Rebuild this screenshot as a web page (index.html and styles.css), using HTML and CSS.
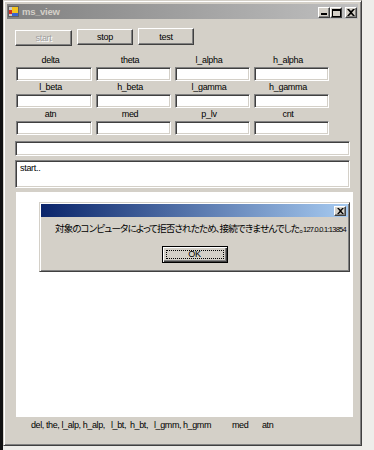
FILE: index.html
```html
<!DOCTYPE html>
<html lang="ja">
<head>
    <meta charset="UTF-8">
    <title>ms_view</title>
    <link rel="stylesheet" href="styles.css">
</head>
<body>
    <div class="window">
        <div class="titlebar">
            <svg class="app-icon" width="11" height="11" viewBox="0 0 11 11">
                <rect x="0.5" y="0.5" width="10" height="10" fill="#c8c8c8" stroke="#606060"/>
                <rect x="1" y="4" width="3" height="4" fill="#d03020"/>
                <rect x="4" y="1" width="6" height="6" fill="#f2c420"/>
                <rect x="4" y="7" width="6" height="3" fill="#3a64d0"/>
            </svg>
            <span class="title">ms_view</span>
            <div class="caption-btns">
                <span class="cap-btn min"><svg width="6" height="2"><rect width="6" height="2"/></svg></span>
                <span class="cap-btn max"><svg width="9" height="8"><path d="M0 0h9v8H0zM1 2v5h7V2z" fill-rule="evenodd"/></svg></span>
                <span class="cap-btn close"><svg width="8" height="7" viewBox="0 0 8 7"><path d="M0 0h2l2 2 2-2h2L5 3.5 8 7H6L4 5 2 7H0l3-3.5z"/></svg></span>
            </div>
        </div>

        <div class="client">
            <!-- start / stop / test -->
            <div class="toolbar">
                <button class="btn btn-start" disabled>start</button>
                <button class="btn btn-stop">stop</button>
                <button class="btn btn-test">test</button>
            </div>

            <!-- value boxes -->
            <div class="fields">
                <div class="field"><div class="label">delta</div><div class="textbox"></div></div>
                <div class="field"><div class="label">theta</div><div class="textbox"></div></div>
                <div class="field"><div class="label">l_alpha</div><div class="textbox"></div></div>
                <div class="field"><div class="label">h_alpha</div><div class="textbox"></div></div>
                <div class="field"><div class="label">l_beta</div><div class="textbox"></div></div>
                <div class="field"><div class="label">h_beta</div><div class="textbox"></div></div>
                <div class="field"><div class="label">l_gamma</div><div class="textbox"></div></div>
                <div class="field"><div class="label">h_gamma</div><div class="textbox"></div></div>
                <div class="field"><div class="label">atn</div><div class="textbox"></div></div>
                <div class="field"><div class="label">med</div><div class="textbox"></div></div>
                <div class="field"><div class="label">p_lv</div><div class="textbox"></div></div>
                <div class="field"><div class="label">cnt</div><div class="textbox"></div></div>
            </div>

            <div class="textbox wide"></div>
            <div class="textbox wide multi">start..</div>

            <!-- graph area -->
            <div class="graph"></div>

            <div class="legend">
                <span>del, the, l_alp, h_alp,</span>
                <span>l_bt,</span>
                <span>h_bt,</span>
                <span>l_gmm,</span>
                <span>h_gmm</span>
                <span>med</span>
                <span>atn</span>
            </div>
        </div>
    </div>

    <!-- error message box -->
    <div class="msgbox">
        <div class="msg-title">
            <span class="cap-btn small"><svg width="7" height="6" viewBox="0 0 8 7"><path d="M0 0h2l2 2 2-2h2L5 3.5 8 7H6L4 5 2 7H0l3-3.5z"/></svg></span>
        </div>
        <div class="msg-text">対象のコンピュータによって拒否されたため、接続できませんでした。<span class="addr">127.0.0.1:13854</span></div>
        <div class="msg-actions">
            <button class="btn btn-ok"><span class="focus">OK</span></button>
        </div>
    </div>
</body>
</html>
```

FILE: styles.css
```css
body {
    margin: 0;
    width: 374px;
    height: 450px;
    overflow: hidden;
    position: relative;
    background: linear-gradient(to right, #111 0, #111 3px, transparent 3px), #eeedea;
    font-family: "Liberation Sans", "Noto Sans CJK JP", sans-serif;
    font-size: 9px;
    letter-spacing: -0.3px;
    color: #000;
}

/* main form window */
.window {
    position: absolute;
    left: 3px;
    top: 0;
    width: 359px;
    height: 446px;
    box-sizing: border-box;
    background: #d4d0c8;
    border: 1px solid;
    border-color: #d4d0c8 #404040 #404040 #d4d0c8;
    box-shadow: inset 1px 1px #fff, inset -1px -1px #808080;
    padding: 3px;
}

.titlebar {
    height: 15px;
    display: flex;
    align-items: center;
    background: linear-gradient(to right, #808080, #c0c0c0);
    padding: 0 1px 0 1px;
}

.app-icon {
    display: block;
    flex: none;
}

.title {
    margin-left: 3px;
    font-weight: bold;
    color: #d4d0c8;
    font-size: 9.5px;
}

.caption-btns {
    margin-left: auto;
    display: flex;
    padding-top: 2px;
}

.cap-btn {
    box-sizing: border-box;
    width: 12px;
    height: 11px;
    display: flex;
    align-items: center;
    justify-content: center;
    background: #d4d0c8;
    border: 1px solid;
    border-color: #fff #404040 #404040 #fff;
    box-shadow: inset -1px -1px #808080;
}

.cap-btn svg {
    display: block;
    fill: #000;
}

.cap-btn.min {
    align-items: flex-end;
    justify-content: flex-start;
    padding: 0 0 2px 2px;
}

.cap-btn.close {
    margin-left: 3px;
}

.client {
    padding: 9px 0 0 8px;
}

/* buttons */
.toolbar {
    display: flex;
    align-items: flex-start;
    gap: 5px;
}

.btn {
    box-sizing: border-box;
    height: 16px;
    padding: 0;
    margin: 0;
    background: #d4d0c8;
    border: 1px solid;
    border-color: #fff #404040 #404040 #fff;
    box-shadow: inset -1px -1px #808080;
    font: inherit;
    letter-spacing: inherit;
    color: #000;
}

.btn-start {
    width: 57px;
    margin-top: 2px;
    color: #a0a0a0;
    text-shadow: 1px 1px #fff;
}

.btn-stop {
    width: 56px;
    margin-top: 1px;
}

.btn-test {
    width: 56px;
    height: 17px;
}

/* label + textbox grid */
.fields {
    margin: 8px 0 0 1px;
    display: grid;
    grid-template-columns: 76px 75px 75px 75px;
    column-gap: 4px;
}

.label {
    height: 13px;
    line-height: 13px;
    text-align: center;
    padding-right: 7px;
}

.textbox {
    box-sizing: border-box;
    height: 14px;
    background: #fff;
    border: 1px solid;
    border-color: #808080 #fff #fff #808080;
    box-shadow: inset 1px 1px #404040, inset -1px -1px #d4d0c8;
}

.textbox.wide {
    width: 335px;
    height: 15px;
    margin-top: 6px;
}

.textbox.multi {
    height: 28px;
    margin-top: 4px;
    padding: 2px 4px;
    line-height: 11px;
}

.graph {
    margin: 4px 0 0 1px;
    width: 337px;
    height: 225px;
    background: #fff;
}

.legend {
    margin: 3px 0 0 16px;
    display: grid;
    grid-template-columns: 80px 19px 24px 29px 49px 30px auto;
    line-height: 11px;
    letter-spacing: -0.4px;
}

/* message box */
.msgbox {
    position: absolute;
    left: 39px;
    top: 202px;
    width: 311px;
    height: 70px;
    box-sizing: border-box;
    background: #d4d0c8;
    border: 1px solid;
    border-color: #d4d0c8 #404040 #404040 #d4d0c8;
    box-shadow: inset 1px 1px #fff, inset -1px -1px #808080;
    padding: 1px;
}

.msg-title {
    height: 13px;
    display: flex;
    align-items: center;
    justify-content: flex-end;
    padding-right: 2px;
    background: linear-gradient(to right, #0a246a, #a6caf0);
}

.cap-btn.small {
    width: 12px;
    height: 10px;
}

.msg-text {
    margin-top: 6px;
    padding-left: 14px;
    line-height: 12px;
    font-size: 9.5px;
    letter-spacing: -0.85px;
    font-feature-settings: "palt";
    white-space: nowrap;
}

.addr {
    font-size: 7.5px;
    letter-spacing: -0.75px;
}

.msg-actions {
    margin-top: 10px;
    display: flex;
    justify-content: center;
}

.btn-ok {
    width: 66px;
    height: 17px;
    border-color: #000;
    box-shadow: inset 1px 1px #fff, inset -1px -1px #404040, inset -2px -2px #808080;
    padding: 3px;
}

.btn-ok .focus {
    display: block;
    height: 100%;
    box-sizing: border-box;
    border: 1px dotted #000;
    line-height: 7px;
}
```
